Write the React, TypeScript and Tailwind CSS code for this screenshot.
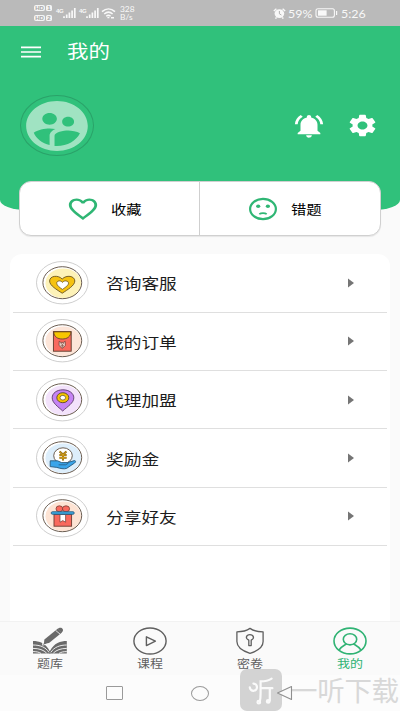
import React from 'react';
import clsx from 'clsx';
import { MdNotificationsActive, MdSettings, MdSupervisedUserCircle, MdFavoriteBorder } from 'react-icons/md';

interface BadgeProps {
  tint: string;
  children: React.ReactNode;
}

const Badge = ({ tint, children }: BadgeProps) => (
  <svg width="53" height="44" viewBox="0 0 53 44" className="shrink-0" fill="none">
    <ellipse cx="26.3" cy="21.7" rx="25.8" ry="21.2" fill="#fff" stroke="#b9b9b9" strokeWidth="0.7" />
    <ellipse cx="27.3" cy="22.3" rx="17.8" ry="14.8" fill={tint} />
    <ellipse cx="26.3" cy="21.7" rx="19.4" ry="16" stroke="#5b4c3e" strokeWidth="0.9" />
    {children}
  </svg>
);

const ServiceIcon = () => (
  <Badge tint="#fdf2b8">
    <path
      d="M26.2 32.2C21 28.8 13.6 24.6 13.6 20C13.6 14.8 22 13.6 26.2 18C30.4 13.6 38.8 14.8 38.8 20C38.8 24.6 31.4 28.8 26.2 32.2Z"
      fill="#f5c211"
      stroke="#6b5320"
      strokeWidth="0.9"
    />
    <path
      d="M26.4 28.4C24 26.6 20.7 24.6 20.7 22.2C20.7 19.6 24.6 19 26.4 21.4C28.2 19 32.5 19.6 32.5 22.2C32.5 24.6 28.8 26.6 26.4 28.4Z"
      fill="#fff"
      stroke="#6b5320"
      strokeWidth="0.8"
    />
  </Badge>
);

const OrderIcon = () => (
  <Badge tint="#fde5d8">
    <rect x="17.4" y="12.6" width="17.8" height="19.6" fill="#f9695d" stroke="#5b3a2b" strokeWidth="0.9" />
    <path d="M17.8 12.8H34.8C34.8 17.8 31 20 26.3 20S17.8 17.8 17.8 12.8Z" fill="#f7c600" stroke="#5b3a2b" strokeWidth="0.8" />
    <path d="M23.2 22.2L24.8 23.4H27.6L29.2 22.2L29.4 26.4L26.3 29.6L23 26.4Z" fill="#e8cfc4" stroke="#6b3b30" strokeWidth="0.7" />
    <path d="M24.6 23.8L26.3 25.6L28 23.8M26.3 25.6V29M24.6 26.8H28" stroke="#6b3b30" strokeWidth="0.6" />
  </Badge>
);

const AgentIcon = () => (
  <Badge tint="#f3e2fb">
    <path
      d="M26.7 33C22 28.6 16.2 25 16.2 19.8C16.2 15.2 20.8 11.8 26.9 11.8S37.8 15.2 37.8 19.8C37.8 25 31.4 28.6 26.7 33Z"
      fill="#c583f5"
      stroke="#5a3b66"
      strokeWidth="0.9"
    />
    <ellipse cx="26.8" cy="19.7" rx="6" ry="5" fill="#f5c400" stroke="#5a4a28" strokeWidth="0.9" />
    <ellipse cx="26.8" cy="19.7" rx="2.8" ry="2.3" fill="#fff" stroke="#5a4a28" strokeWidth="0.7" />
  </Badge>
);

const BonusIcon = () => (
  <Badge tint="#ddeefb">
    <ellipse cx="27" cy="19.7" rx="9.3" ry="7.9" fill="#fff" stroke="#5b4c3e" strokeWidth="0.9" />
    <path d="M23.6 15.4L27 18.6L30.4 15.4M27 18.6V24.4M23.4 19H30.6M23.4 21.8H30.6" stroke="#8a6412" strokeWidth="2" />
    <path d="M23.6 15.4L27 18.6L30.4 15.4M27 18.6V24.4M23.4 19H30.6M23.4 21.8H30.6" stroke="#e3ad1b" strokeWidth="0.9" />
    <path
      d="M14.2 24.8H21.6L25.6 26.6H31.4L38.4 24.6C40 24.6 39.8 26.2 38.6 27L30.6 32.4C28 33.4 24 32.4 20.8 31.4L14.2 30.6Z"
      fill="#3aa5ea"
      stroke="#28597c"
      strokeWidth="0.9"
    />
    <path d="M22.6 28.8H29.6L32.4 27.2" stroke="#28597c" strokeWidth="0.8" />
  </Badge>
);

const ShareIcon = () => (
  <Badge tint="#fde3d3">
    <ellipse cx="23.4" cy="14.8" rx="3.4" ry="3" fill="#f9695d" stroke="#7a3c34" strokeWidth="0.8" />
    <ellipse cx="30" cy="14.8" rx="3.6" ry="3" fill="#f9695d" stroke="#7a3c34" strokeWidth="0.8" />
    <rect x="18" y="20.4" width="17.6" height="11.8" fill="#f9695d" stroke="#6b3b30" strokeWidth="0.9" />
    <path d="M24 20.4H29.6V28.2L26.8 26.6L24 28.2Z" fill="#fff" stroke="#6b3b30" strokeWidth="0.7" />
    <rect x="15.2" y="17.7" width="23" height="2.6" rx="1.2" fill="#3aa5dc" stroke="#28597c" strokeWidth="0.8" />
  </Badge>
);

const menu = [
  { label: '咨询客服', Icon: ServiceIcon },
  { label: '我的订单', Icon: OrderIcon },
  { label: '代理加盟', Icon: AgentIcon },
  { label: '奖励金', Icon: BonusIcon },
  { label: '分享好友', Icon: ShareIcon },
];

const BookIcon = () => (
  <svg width="36" height="28" viewBox="0 0 36 28" fill="none">
    <path d="M12.4 12.4L25.6 1.8L30 5.4L17 16L11.8 17.4Z" fill="#6a6a6a" />
    <path d="M25.4 2L27 1C29.6 0 32 2 30.6 4.6L29.6 5.6Z" fill="#6a6a6a" />
    <path d="M23.6 3.4L28.2 7.2" stroke="#fafafa" strokeWidth="0.8" />
    <path d="M1 14C7 14 14 16 17.8 24.2C22 16 28.6 14 34.8 14V18.4L17.8 26.6L1 18.4Z" fill="#6a6a6a" />
    <path d="M1 17.6C8 17.6 14 19.4 17.8 25.8C22 19.4 28.6 17.6 34.8 17.6V26.4H1Z" fill="#6a6a6a" />
    <path
      d="M1 18C8 18 13.6 20 17 25.4M1 21.4C7 21.4 11.6 23 14.6 26M1 24.6C4 24.6 7 25 9 26.4M34.8 18C28 18 22.2 20 18.8 25.4M34.8 21.4C29 21.4 24.4 23 21.4 26M34.8 24.6C32 24.6 29 25 27 26.4"
      stroke="#fafafa"
      strokeWidth="0.9"
    />
    <path d="M11 12.4L10.4 18.2L17 16.6" stroke="#fafafa" strokeWidth="0.8" />
  </svg>
);

const PlayIcon = () => (
  <svg width="36" height="28" viewBox="0 0 36 28" fill="none" stroke="#5f5f5f" strokeWidth="1.4">
    <ellipse cx="18" cy="14" rx="16.1" ry="13" />
    <path d="M14.4 9.8V18.6L23.4 14.2Z" strokeLinejoin="round" />
  </svg>
);

const ShieldIcon = () => (
  <svg width="36" height="28" viewBox="0 0 36 28" fill="none" stroke="#5f5f5f" strokeWidth="1.3" strokeLinejoin="round">
    <path d="M18 1.4C14.4 4 9.6 4.8 4.9 4.8V14.6C4.9 20.6 11 24.2 18 26.4C25 24.2 31.1 20.6 31.1 14.6V4.8C26.4 4.8 21.6 4 18 1.4Z" />
    <path d="M16.8 13.2C12.8 11.4 14.2 7.7 17.9 7.7S23 11.4 19.2 13.2V18.6H16.8Z" />
  </svg>
);

const UserIcon = () => (
  <svg width="36" height="28" viewBox="0 0 36 28" fill="none" stroke="#30b374" strokeWidth="1.6">
    <ellipse cx="18" cy="14" rx="16" ry="12.9" />
    <ellipse cx="18" cy="12.3" rx="6.7" ry="5.6" />
    <path d="M7 23.2C9.2 19.2 12.4 18.4 14.6 16.8M29 23.2C26.8 19.2 23.6 18.4 21.4 16.8" />
  </svg>
);

const tabs = [
  { label: '题库', Icon: BookIcon, active: false },
  { label: '课程', Icon: PlayIcon, active: false },
  { label: '密卷', Icon: ShieldIcon, active: false },
  { label: '我的', Icon: UserIcon, active: true },
];

const HdBadge = ({ sim }: { sim: string }) => (
  <div className="flex h-[6px] gap-px text-[6px] leading-[6px] font-bold text-[#a8a8a8]">
    <span className="flex w-[11px] justify-center rounded-[2px] bg-[#f4f4f4]">HD</span>
    <span className="flex w-[6px] justify-center rounded-[1.5px] bg-[#f4f4f4]">{sim}</span>
  </div>
);

const Signal = () => (
  <div className="flex w-[20px]">
    <span className="w-[7px] text-[6px] leading-[6px] font-bold tracking-tighter">4G</span>
    <svg width="13" height="10" viewBox="0 0 13 10" stroke="currentColor" strokeWidth="1.7">
      <path d="M1 10V8.2M3.7 10V6.6M6.4 10V4.6M9.1 10V2.6M11.8 10V0" />
    </svg>
  </div>
);

const StatusBar = () => (
  <div className="flex h-[26px] items-center bg-[#bababa] pl-[34px] text-[#f8f8f8]">
    <div className="flex w-[18px] flex-col gap-[4px]">
      <HdBadge sim="1" />
      <HdBadge sim="2" />
    </div>
    <div className="ml-1 flex gap-[3px]">
      <Signal />
      <Signal />
    </div>
    <svg width="15" height="11" viewBox="0 0 15 11" className="ml-[2px]" fill="none" stroke="currentColor" strokeWidth="1.5">
      <path d="M1 3.6C5 0 10 0 14 3.6M3.2 6C6 3.6 9 3.6 11.6 6M5.2 8.2C6.6 7 8.2 7 9.6 8.2" />
      <path d="M6.4 9.6H8.4M10 9.8H13" />
    </svg>
    <div className="ml-[4px] w-[15px] font-['Lato',sans-serif] text-[7px] leading-[8.5px]">
      <div className="origin-left scale-x-[1.2]">328</div>
      <div className="origin-left scale-x-[1.2]">B/s</div>
    </div>
    <svg width="13" height="11" viewBox="0 0 13 11" className="ml-[138px]" fill="none">
      <ellipse cx="6.4" cy="5.6" rx="4.8" ry="4.4" fill="currentColor" />
      <path d="M0.8 3L3.4 0.8M12.2 3L9.6 0.8M2.4 10.6L3.6 9.4M10.4 10.6L9.2 9.4" stroke="currentColor" strokeWidth="1.4" />
      <path d="M6.4 3V5.8L8.4 7" stroke="#aaa" strokeWidth="0.9" />
    </svg>
    <span className="ml-[2px] w-[25px] origin-left scale-x-[1.13] font-['Lato',sans-serif] text-[11px] leading-none whitespace-nowrap">59%</span>
    <svg width="23" height="10" viewBox="0 0 23 10" className="ml-[2px]" fill="none">
      <rect x="1" y="0.7" width="18.4" height="8.6" rx="2" stroke="currentColor" strokeWidth="1.1" />
      <rect x="3" y="2.3" width="8.6" height="5.4" fill="currentColor" />
      <path d="M21.6 3V7" stroke="currentColor" strokeWidth="1.2" />
    </svg>
    <span className="ml-[3px] origin-left scale-x-[1.13] font-['Lato',sans-serif] text-[11px] leading-none">5:26</span>
  </div>
);

const SadFace = () => (
  <svg width="30" height="24" viewBox="0 0 30 24" fill="none" stroke="#2fb674">
    <ellipse cx="15" cy="12" rx="12.9" ry="10.2" strokeWidth="2.2" />
    <ellipse cx="10.2" cy="9.2" rx="2.1" ry="1.7" fill="#2fb674" stroke="none" />
    <ellipse cx="19.9" cy="9.2" rx="2.1" ry="1.7" fill="#2fb674" stroke="none" />
    <path d="M11.3 17.2C13 15.7 17 15.7 18.7 17.2" strokeWidth="1.6" />
  </svg>
);

const App = () => {
  return (
    <div className="relative flex h-[711px] w-[400px] flex-col overflow-hidden bg-[#fafafa] font-['Liberation_Sans','Noto_Sans_CJK_SC',sans-serif]">
      <StatusBar />

      <header className="h-[184px] shrink-0 rounded-b-[26px_10px] bg-[#30c17b] text-white">
        <div className="flex h-[51px] items-center pl-[21px]">
          <svg width="20" height="12" viewBox="0 0 20 12" stroke="currentColor" strokeWidth="1.7">
            <path d="M0 1.3H20M0 6H20M0 10.7H20" />
          </svg>
          <h1 className="ml-[26px] origin-left scale-x-[1.19] text-[18px] leading-none">我的</h1>
        </div>
        <div className="mt-[18px] flex h-[61px] items-center pl-5">
          <div className="flex h-[61px] w-[74px] items-center justify-center rounded-[50%] border border-[#2aa269]">
            <MdSupervisedUserCircle preserveAspectRatio="none" className="h-[60px] w-[74px] shrink-0 text-[#a0e3c2]" />
          </div>
          <MdNotificationsActive preserveAspectRatio="none" className="ml-[198px] h-[28px] w-[34px]" />
          <MdSettings preserveAspectRatio="none" className="ml-[20px] h-[27px] w-[33px]" />
        </div>
      </header>

      <div className="relative mx-[19px] -mt-[29px] flex h-[55px] shrink-0 rounded-[12px] border border-[#d0d0d0] bg-white shadow-[0_1px_1px_rgba(0,0,0,0.08)]">
        <div className="flex w-[180px] items-center border-r border-[#cfcfcf] pl-[46px]">
          <MdFavoriteBorder preserveAspectRatio="none" className="h-[28px] w-[34px] text-[#2fb674]" />
          <span className="ml-[11px] origin-left scale-x-[1.18] pt-[2px] text-[13px] leading-none text-black">收藏</span>
        </div>
        <div className="flex flex-1 items-center pl-[48px]">
          <SadFace />
          <span className="ml-[13px] origin-left scale-x-[1.18] pt-[2px] text-[13px] leading-none text-black">错题</span>
        </div>
      </div>

      <main className="mx-[10px] mt-[18px] flex-1 rounded-t-[12px] bg-white px-[3px] pt-[0.2px]">
        {menu.map(({ label, Icon }) => (
          <div key={label} className="flex h-[58.4px] items-center border-b-[1.5px] border-[#dfdfdf] pl-[23px]">
            <Icon />
            <span className="ml-[17px] origin-left scale-x-[1.18] pt-[2px] text-[15px] leading-none text-[#1c1c1c]">{label}</span>
            <svg width="6" height="10" viewBox="0 0 6 10" className="mr-[33px] ml-auto">
              <path d="M0 0.5L6 5L0 9.5Z" fill="#757575" />
            </svg>
          </div>
        ))}
      </main>

      <nav className="flex h-[54px] shrink-0 border-t border-[#f2f2f2] bg-[#fafafa]">
        {tabs.map(({ label, Icon, active }) => (
          <div key={label} className="flex flex-1 flex-col items-center pt-[5px]">
            <Icon />
            <span className={clsx('mt-[2px] scale-x-[1.18] text-[11px] leading-[14px]', active ? 'text-[#30b374]' : 'text-[#5f5f5f]')}>
              {label}
            </span>
          </div>
        ))}
      </nav>

      <div className="flex h-[36px] shrink-0 items-center bg-[#fcfcfc] pl-[106px]">
        <div className="h-[14px] w-[17px] rounded-[1px] border border-[#9a9a9a]" />
        <div className="ml-[68px] h-[15px] w-[18px] rounded-[50%] border border-[#9a9a9a]" />
      </div>

      {/* download site watermark */}
      <div className="absolute top-[669px] left-[240px] flex h-[42px] items-center">
        <svg width="42" height="42" viewBox="0 0 42 42" fill="none" stroke="#fafafa" strokeWidth="2.2" strokeLinecap="round">
          <rect width="42" height="42" rx="7" fill="#d3d3d3" stroke="none" />
          <path d="M9.8 18.4A3.6 3.6 0 1 0 13.4 14.6" />
          <path d="M31.6 9.6C28 12 24.6 12.4 20.6 12.4V24C20.6 28 20.4 30.4 19.8 32.6M21 19.2H32.4M29.8 19.6V31.6" />
          <circle cx="18.8" cy="33.2" r="1.3" />
          <circle cx="28.2" cy="32.4" r="1.3" />
        </svg>
        <span className="ml-[8px] pt-[3px] text-[27.5px] leading-none tracking-[-0.3px] whitespace-nowrap text-[#d8d8d8]">一听下载</span>
      </div>
      <svg width="17" height="16" viewBox="0 0 17 16" className="absolute top-[685px] left-[276px]">
        <path d="M15.5 1.5V14.5L1.5 8Z" fill="#fafafa" stroke="#8f8f8f" strokeWidth="1.1" strokeLinejoin="round" />
      </svg>
    </div>
  );
};

export default App;
